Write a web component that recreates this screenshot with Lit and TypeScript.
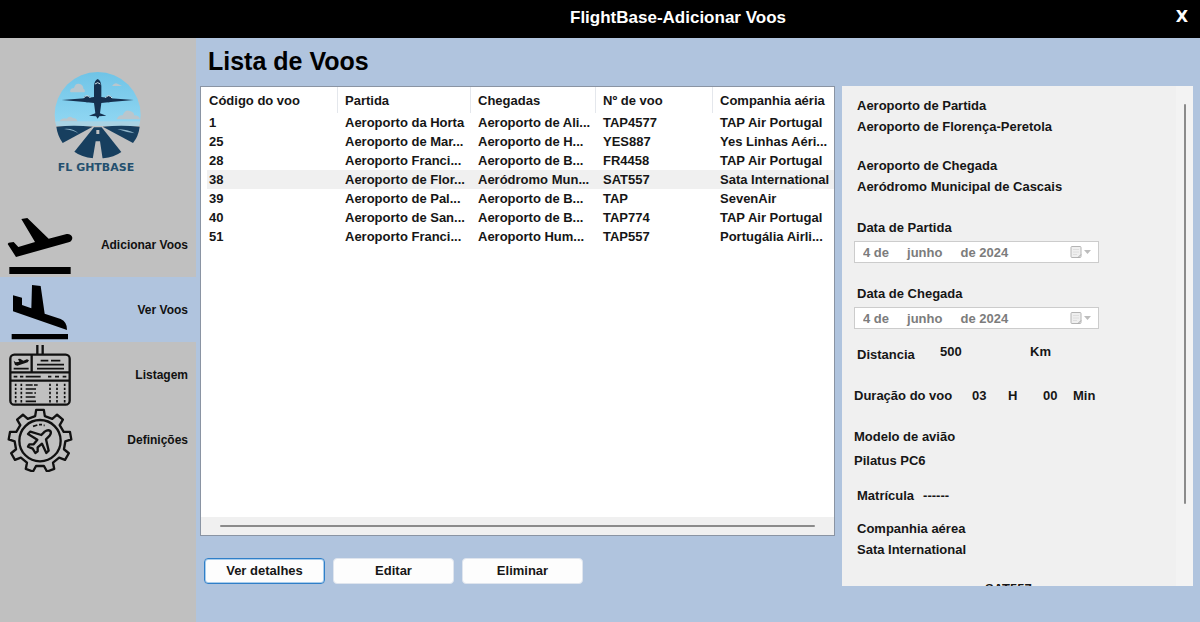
import { LitElement, html, css, svg } from "lit";
import { customElement, state } from "lit/decorators.js";
import { classMap } from "lit/directives/class-map.js";

interface Flight {
  code: string;
  from: string;
  to: string;
  number: string;
  airline: string;
}

const FLIGHTS: Flight[] = [
  { code: "1", from: "Aeroporto da Horta", to: "Aeroporto de Ali...", number: "TAP4577", airline: "TAP Air Portugal" },
  { code: "25", from: "Aeroporto de Mar...", to: "Aeroporto de H...", number: "YES887", airline: "Yes Linhas Aéri..." },
  { code: "28", from: "Aeroporto Franci...", to: "Aeroporto de B...", number: "FR4458", airline: "TAP Air Portugal" },
  { code: "38", from: "Aeroporto de Flor...", to: "Aeródromo Mun...", number: "SAT557", airline: "Sata International" },
  { code: "39", from: "Aeroporto de Pal...", to: "Aeroporto de B...", number: "TAP", airline: "SevenAir" },
  { code: "40", from: "Aeroporto de San...", to: "Aeroporto de B...", number: "TAP774", airline: "TAP Air Portugal" },
  { code: "51", from: "Aeroporto Franci...", to: "Aeroporto Hum...", number: "TAP557", airline: "Portugália Airli..." },
];

const DATE_TEXT = ["4 de", "junho", "de 2024"].join("     ");

// Outline of a cog with evenly spaced trapezoid teeth.
function cogPath(cx: number, cy: number, teeth: number, outer: number, inner: number): string {
  const step = 360 / teeth;
  const points: string[] = [];
  for (let i = 0; i < teeth; i++) {
    const corners: [number, number][] = [
      [-11, inner],
      [-7, outer],
      [7, outer],
      [11, inner],
    ];
    for (const [offset, r] of corners) {
      const a = ((i * step + offset - 90) * Math.PI) / 180;
      points.push(`${(cx + r * Math.cos(a)).toFixed(1)} ${(cy + r * Math.sin(a)).toFixed(1)}`);
    }
  }
  return `M${points.join("L")}Z`;
}

const takeoffIcon = html`<svg class="icon" viewBox="0 21 234 195" aria-hidden="true">
  <path d="M64 42 82 39 146 101 200 87Q214 86 217 98Q217 108 206 112L48 156 23 117 26 113 41 111 55 126 105 111Z" />
  <path d="M28 186H212V207H28Z" />
</svg>`;

const landingIcon = html`<svg class="icon" viewBox="0 216 234 195" aria-hidden="true">
  <path d="M96 240 122 243 134 326 182 342Q202 351 201 375L39 319V271L66 278V300L94 310Z" />
  <path d="M35 387H204V403H35Z" />
</svg>`;

const boardIcon = html`<svg class="icon line" viewBox="0 6 234 195" aria-hidden="true">
  <path d="M112 15V43M128 15V43" />
  <rect x="31" y="44" width="178" height="150" rx="12" />
  <path d="M95 44V97M31 97H209M31 122H209" />
  <path class="thin" d="M41 86H86M122 62H145M153 62H181M111 74H192M111 86H192" />
  <path class="thin" d="M41 110H52M60 110H70M77 110H122M144 110H154M165 110H177M188 110H199" />
  <path class="thin" d="M77 135H98M102 135H113M77 147H108M77 159H98M103 159H108M77 171H106M77 184H108" />
  <path class="thin" stroke-dasharray="7 5.3" d="M47 131V188M64 131V188M150 131V188M171 131V188M194 131V188" />
  <path class="solid" d="M41 62 47 67 58 65 54 57 60 56 70 62 81 58 87 61 83 67 52 77 45 75Z" />
</svg>`;

const cogIcon = html`<svg class="icon line" viewBox="0 201 234 195" aria-hidden="true">
  ${svg`<path d=${cogPath(120, 303, 9, 94, 76)} />`}
  <circle cx="120" cy="302" r="62" />
  <path class="thin" d="M99 259 112 255M117 254H126M131 256H134" />
  <path
    d="M134 275 124 285 91 275 84 282 112 299 101 313 88 313 84 320 98 326 106 339 113 334 113 322 126 311 139 339 146 332 138 298 149 287Q155 278 151 273Q144 268 134 275Z"
  />
</svg>`;

const logo = html`<svg class="logo-art" viewBox="-12 0 360 306" aria-hidden="true">
  <defs>
    <clipPath id="disc"><circle cx="173" cy="165" r="129" /></clipPath>
    <linearGradient id="sky" x1="0" y1="0" x2="0" y2="1">
      <stop offset="0" stop-color="#6ec3e6" />
      <stop offset="1" stop-color="#8fd6f2" />
    </linearGradient>
  </defs>
  <g clip-path="url(#disc)">
    <rect x="40" y="30" width="270" height="156" fill="url(#sky)" />
    <rect x="40" y="184" width="270" height="14" fill="#a9d3e4" />
  </g>
  <g fill="#b9c6cd">
    <path d="M90 94Q92 84 102 84Q106 68 120 72Q130 76 130 86Q136 88 134 97H92Z" />
    <path d="M216 78Q224 66 234 72L246 78Z" />
    <path d="M230 178Q236 164 248 166Q256 146 272 154Q284 158 282 166Q298 166 300 178Z" />
    <path d="M58 184Q66 172 80 176Q88 166 98 174Q110 174 112 184Z" />
  </g>
  <g fill="#173f5f">
    <path d="M49 200Q100 195 158 200L68 249Q52 226 49 200Z" />
    <path d="M188 200Q244 195 299 200Q296 228 279 249Z" />
    <path d="M162 202H185L244 276Q222 292 190 295H160Q124 291 103 275Z" />
  </g>
  <path d="M167 244H180L188 297H158ZM169 210H178V222H169Z" fill="#c0c0c0" />
  <path d="M72 207Q100 204 116 221Q102 211 72 207ZM232 207Q264 208 284 220Q256 216 232 207Z" fill="#8fb4c8" />
  <g fill="#16304f">
    <path
      d="M173 57Q183 62 184 78V111L212 115 281 120 212 126 184 129 180 160 199 167 178 169 173 176 168 169 147 167 166 160 162 129 134 126 65 120 134 115 162 111V78Q163 62 173 57Z"
    />
    <circle cx="141" cy="117" r="10" />
    <circle cx="206" cy="117" r="10" />
  </g>
  <path d="M131 114Q141 100 151 114M196 114Q206 100 216 114M165 72Q173 64 181 72" fill="none" stroke="#d4e3ea" stroke-width="3" />
</svg>`;

const NAV = [
  { label: "Adicionar Voos", icon: takeoffIcon },
  { label: "Ver Voos", icon: landingIcon },
  { label: "Listagem", icon: boardIcon },
  { label: "Definições", icon: cogIcon },
];

@customElement("side-bar")
class SideBar extends LitElement {
  @state() private current = 1;

  static styles = css`
    :host {
      display: block;
      background: #c0c0c0;
      padding-top: 22px;
    }
    .brand {
      display: flex;
      flex-direction: column;
      align-items: center;
      color: #24506f;
      font: 700 11px/12px "DejaVu Sans", sans-serif;
      padding-right: 4px;
      margin-bottom: 38px;
    }
    .logo-art {
      display: block;
      width: 120px;
      height: 102px;
    }
    nav {
      display: flex;
      flex-direction: column;
    }
    .item {
      display: flex;
      align-items: center;
      justify-content: space-between;
      height: 65px;
      padding: 0 8px 0 0;
      border: 0;
      background: none;
      color: #111;
      font: 700 12px/16px "Liberation Sans", Arial, sans-serif;
      cursor: pointer;
    }
    .item.current {
      background: #b0c4de;
    }
    .icon {
      width: 78px;
      height: 65px;
      fill: #000;
    }
    .line {
      fill: none;
      stroke: #111;
      stroke-width: 7;
      stroke-linejoin: round;
    }
    .thin {
      stroke-width: 5;
    }
    .solid {
      fill: #111;
      stroke: none;
    }
  `;

  render() {
    return html`
      <div class="brand">${logo}<span>FL GHTBASE</span></div>
      <nav>
        ${NAV.map(
          (item, i) => html`<button
            type="button"
            class=${classMap({ item: true, current: i === this.current })}
            @click=${() => (this.current = i)}
          >
            ${item.icon}<span>${item.label}</span>
          </button>`
        )}
      </nav>
    `;
  }
}

@customElement("flight-list")
class FlightList extends LitElement {
  @state() private selected = "38";

  static styles = css`
    :host {
      display: flex;
      flex-direction: column;
      box-sizing: border-box;
      min-height: 0;
      background: #fff;
      border: 1px solid #8a94a3;
      overflow: hidden;
    }
    .rows {
      padding-left: 6px;
    }
    table {
      width: 100%;
      table-layout: fixed;
      border-collapse: collapse;
    }
    .code {
      width: 131px;
    }
    .from {
      width: 133px;
    }
    .to {
      width: 125px;
    }
    .number {
      width: 117px;
    }
    th,
    td {
      padding: 0 0 0 7px;
      text-align: left;
      font-weight: 700;
      white-space: nowrap;
      overflow: hidden;
    }
    th:first-child,
    td:first-child {
      padding-left: 2px;
    }
    th {
      height: 26px;
      box-shadow: inset -1px 0 #e4e7ec;
    }
    th:last-child {
      box-shadow: none;
    }
    td {
      height: 19px;
    }
    .selected {
      background: #f0f0f0;
    }
    .track {
      margin-top: auto;
      background: #f0f0f0;
      padding: 8px 19px;
    }
    .thumb {
      height: 2px;
      background: #8b8b8b;
      border-radius: 1px;
    }
  `;

  render() {
    return html`
      <div class="rows">
        <table>
          <colgroup>
            <col class="code" />
            <col class="from" />
            <col class="to" />
            <col class="number" />
            <col />
          </colgroup>
          <thead>
            <tr>
              <th>Código do voo</th>
              <th>Partida</th>
              <th>Chegadas</th>
              <th>Nº de voo</th>
              <th>Companhia aéria</th>
            </tr>
          </thead>
          <tbody>
            ${FLIGHTS.map(
              (f) => html`<tr
                class=${classMap({ selected: f.code === this.selected })}
                @click=${() => (this.selected = f.code)}
              >
                <td>${f.code}</td>
                <td>${f.from}</td>
                <td>${f.to}</td>
                <td>${f.number}</td>
                <td>${f.airline}</td>
              </tr>`
            )}
          </tbody>
        </table>
      </div>
      <div class="track"><div class="thumb"></div></div>
    `;
  }
}

@customElement("flight-details")
class FlightDetails extends LitElement {
  static styles = css`
    :host {
      display: flex;
      box-sizing: border-box;
      min-height: 0;
      background: #f0f0f0;
      overflow: hidden;
      line-height: 21px;
    }
    .content {
      flex: 1;
      display: flex;
      flex-direction: column;
      padding: 9px 0 0 12px;
      min-width: 0;
    }
    .content > * {
      flex: none;
    }
    .inset {
      padding-left: 3px;
    }
    .gap-s {
      margin-top: 12px;
    }
    .gap-m {
      margin-top: 14px;
    }
    .gap-ml {
      margin-top: 18px;
    }
    .gap-l {
      margin-top: 20px;
    }
    .stack {
      display: flex;
      flex-direction: column;
      gap: 3px;
    }
    .picker {
      display: flex;
      align-items: center;
      box-sizing: border-box;
      width: 245px;
      height: 22px;
      padding: 0 6px 0 8px;
      background: #fff;
      border: 1px solid #cccccc;
    }
    .picker input {
      flex: 1;
      min-width: 0;
      padding: 0;
      border: 0;
      background: none;
      color: #7c7c7c;
      font: inherit;
    }
    .picker svg {
      width: 22px;
      height: 14px;
    }
    .distance {
      display: grid;
      grid-template-columns: 83px 90px auto;
      height: 24px;
    }
    .distance .label {
      align-self: end;
    }
    .duration {
      display: grid;
      grid-template-columns: 118px 36px 35px 30px auto;
    }
    .plate {
      display: flex;
      gap: 9px;
    }
    .code {
      padding-left: 131px;
    }
    .track {
      width: 17px;
      box-sizing: border-box;
      background: #f3f3f3;
      padding: 18px 7px 0 8px;
    }
    .thumb {
      height: 83%;
      background: #8b8b8b;
      border-radius: 1px;
    }
  `;

  private picker(id: string, label: string) {
    return html`<div class="stack gap-l">
      <label class="inset" for=${id}>${label}</label>
      <div class="picker">
        <input id=${id} type="text" .value=${DATE_TEXT} disabled />
        <svg viewBox="0 0 22 14" aria-hidden="true">
          <rect x="1" y="1.5" width="10" height="11" rx="1" fill="#efefef" stroke="#b4b4b4" />
          <path d="M3 4.5H9M3 7H9M3 9.500H7" stroke="#dedede" />
          <path d="M8 12.500 11 9.500" stroke="#a4a4a4" />
          <path d="M14 5H21L17.500 9Z" fill="#bdbdbd" />
        </svg>
      </div>
    </div>`;
  }

  render() {
    return html`
      <div class="content">
        <div class="inset">Aeroporto de Partida</div>
        <div class="inset">Aeroporto de Florença-Peretola</div>
        <div class="inset gap-ml">Aeroporto de Chegada</div>
        <div class="inset">Aeródromo Municipal de Cascais</div>
        ${this.picker("departure", "Data de Partida")} ${this.picker("arrival", "Data de Chegada")}
        <div class="inset distance gap-s"><span class="label">Distancia</span><span>500</span><span>Km</span></div>
        <div class="duration gap-l">
          <span>Duração do voo</span><span>03</span><span>H</span><span>00</span><span>Min</span>
        </div>
        <div class="stack gap-l"><span>Modelo de avião</span><span>Pilatus PC6</span></div>
        <div class="inset plate gap-m"><span>Matrícula</span><span>------</span></div>
        <div class="inset gap-s">Companhia aérea</div>
        <div class="inset">Sata International</div>
        <div class="code gap-ml">SAT557</div>
      </div>
      <div class="track"><div class="thumb"></div></div>
    `;
  }
}

@customElement("app-root")
class AppRoot extends LitElement {
  static styles = css`
    :host {
      display: grid;
      grid-template: auto minmax(0, 1fr) / 196px minmax(0, 1fr);
      height: 100vh;
      overflow: hidden;
      background: #b0c4de;
      color: #161616;
      font: 700 13px/19px "Liberation Sans", Arial, sans-serif;
    }
    header {
      grid-column: 1 / -1;
      display: grid;
      grid-template-columns: 1fr auto 1fr;
      align-items: start;
      height: 38px;
      padding: 0 12px 0 168px;
      background: #000;
      color: #fff;
    }
    .app-title {
      grid-column: 2;
      font-size: 17px;
      line-height: 36px;
    }
    .close {
      justify-self: end;
      padding: 0;
      border: 0;
      background: none;
      color: #fff;
      font: 700 16px/34px "DejaVu Sans", sans-serif;
      cursor: pointer;
    }
    main {
      display: flex;
      flex-direction: column;
      min-height: 0;
      padding: 0 7px 36px 4px;
    }
    h1 {
      margin: 0;
      padding: 0 0 2px 8px;
      font-size: 25px;
      line-height: 46px;
      color: #000;
    }
    .columns {
      flex: 1;
      display: grid;
      grid-template: minmax(0, 1fr) / minmax(0, 635fr) minmax(300px, 351fr);
      gap: 7px;
      min-height: 0;
    }
    .left {
      display: flex;
      flex-direction: column;
      gap: 22px;
      min-height: 0;
    }
    flight-list {
      flex: 1;
    }
    .actions {
      display: flex;
      gap: 8px;
      padding: 0 4px 2px;
    }
    .actions button {
      width: 121px;
      height: 26px;
      padding: 0 0 2px;
      border: 1px solid #dfe5ee;
      border-radius: 4px;
      background: #fdfdfd;
      color: inherit;
      font: inherit;
      cursor: pointer;
    }
    .actions .primary {
      border: 1px solid #2f7fc8;
      box-shadow: inset 0 0 0 1px #a9cdec;
    }
  `;

  render() {
    return html`
      <header>
        <span class="app-title">FlightBase-Adicionar Voos</span>
        <button class="close" type="button" aria-label="Fechar">X</button>
      </header>
      <side-bar></side-bar>
      <main>
        <h1>Lista de Voos</h1>
        <div class="columns">
          <div class="left">
            <flight-list></flight-list>
            <div class="actions">
              <button type="button" class="primary">Ver detalhes</button>
              <button type="button">Editar</button>
              <button type="button">Eliminar</button>
            </div>
          </div>
          <flight-details></flight-details>
        </div>
      </main>
    `;
  }
}
